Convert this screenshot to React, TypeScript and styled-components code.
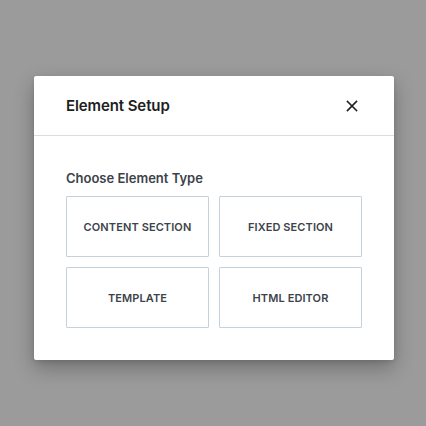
import React from "react";
import styled, { createGlobalStyle } from "styled-components";

const Global = createGlobalStyle`
  html, body {
    margin: 0;
    padding: 0;
    width: 100%;
    height: 100%;
    background: #9b9b9b;
  }
  #root {
    width: 100%;
    height: 100%;
  }
  * { box-sizing: border-box; }
`;

const Overlay = styled.div`
  width: 426px;
  height: 426px;
  display: flex;
  align-items: flex-start;
  justify-content: flex-start;
  padding: 76px 0 0 34px;
  font-family: Inter, "Noto Sans", sans-serif;
`;

const Modal = styled.div`
  width: 360px;
  background: #ffffff;
  border-radius: 2px;
  box-shadow: 0 8px 20px rgba(0, 0, 0, 0.28), 0 2px 4px rgba(0, 0, 0, 0.1);
  display: flex;
  flex-direction: column;
`;

const Header = styled.div`
  height: 60px;
  display: flex;
  align-items: center;
  justify-content: space-between;
  padding: 0 32px;
  border-bottom: 1px solid #dcdcde;
`;

const Title = styled.h1`
  margin: 0;
  font-size: 15px;
  font-weight: 600;
  color: #1e1e1e;
  letter-spacing: -0.1px;
`;

const CloseButton = styled.button`
  width: 24px;
  height: 24px;
  margin-right: -2px;
  border: 0;
  padding: 0;
  background: transparent;
  display: flex;
  align-items: center;
  justify-content: center;
  cursor: pointer;
`;

const Body = styled.div`
  padding: 34px 32px 32px;
  display: flex;
  flex-direction: column;
  gap: 10px;
`;

const Label = styled.div`
  font-size: 13px;
  font-weight: 600;
  color: #3c434a;
  line-height: 16px;
`;

const Grid = styled.div`
  display: grid;
  grid-template-columns: 143px 143px;
  grid-auto-rows: 61px;
  gap: 10px;
`;

const TypeButton = styled.button`
  border: 1px solid #c5d1db;
  background: #ffffff;
  border-radius: 1px;
  font-family: inherit;
  font-size: 11px;
  font-weight: 600;
  text-transform: uppercase;
  color: #3c434a;
  letter-spacing: 0.1px;
  cursor: pointer;
  padding: 0;
`;

const types = ["Content Section", "Fixed Section", "Template", "HTML Editor"];

export default function App() {
  return (
    <>
      <Global />
      <Overlay>
        <Modal>
          <Header>
            <Title>Element Setup</Title>
            <CloseButton aria-label="Close">
              <svg width="12" height="12" viewBox="0 0 12 12">
                <path
                  d="M1.5 1.5 L10.5 10.5 M10.5 1.5 L1.5 10.5"
                  stroke="#1e1e1e"
                  strokeWidth="1.6"
                  strokeLinecap="square"
                />
              </svg>
            </CloseButton>
          </Header>
          <Body>
            <Label>Choose Element Type</Label>
            <Grid>
              {types.map((t) => (
                <TypeButton key={t}>{t}</TypeButton>
              ))}
            </Grid>
          </Body>
        </Modal>
      </Overlay>
    </>
  );
}
